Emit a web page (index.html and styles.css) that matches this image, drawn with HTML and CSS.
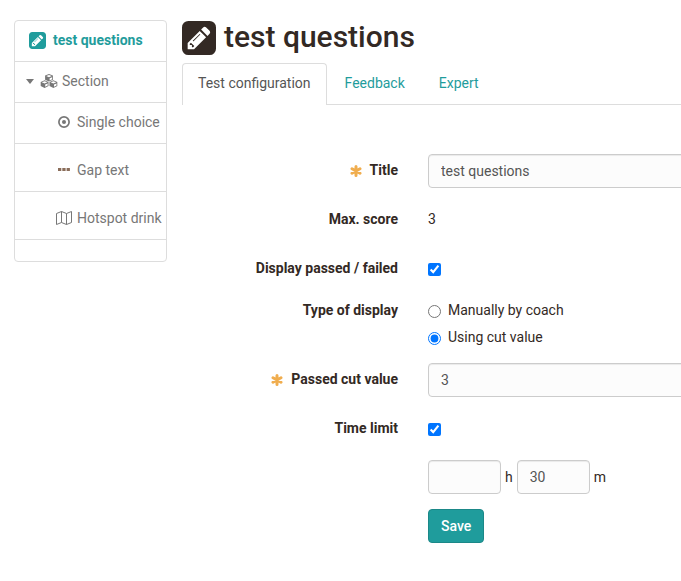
FILE: index.html
```html
<!DOCTYPE html>
<html lang="en">
<head>
<meta charset="utf-8">
<title>test questions</title>
<link rel="stylesheet" href="styles.css">
</head>
<body>
<svg class="defs" aria-hidden="true">
  <symbol id="pencil-square" viewBox="0 128 1536 1536">
    <path d="M404 1108l152 152-52 52h-56v-96h-96v-56zm414-390q14 13-3 30l-291 291q-17 17-30 3-14-13 3-30l291-291q17-17 30-3zm-274 690l544-544-288-288-544 544v288h288zm608-608l92-92q28-28 28-68t-28-68l-152-152q-28-28-68-28t-68 28l-92 92zm384-384v960q0 119-84.5 203.5t-203.5 84.5h-960q-119 0-203.5-84.5t-84.5-203.5v-960q0-119 84.5-203.5t203.5-84.5h960q119 0 203.5 84.5t84.5 203.5z"/>
  </symbol>
  <symbol id="asterisk" viewBox="0 0 12 12">
    <path d="M6 1.500v9M2 3.700l8 4.600M2 8.300l8-4.600" fill="none" stroke="currentColor" stroke-width="3" stroke-linecap="round"/>
  </symbol>
</svg>
<div class="page">
  <nav class="tree" aria-label="Test structure">
    <ul>
      <li class="root"><a href="#"><svg class="icon"><use href="#pencil-square"/></svg>test questions</a></li>
      <li class="section"><a href="#"><svg class="caret" viewBox="0 0 8 5"><path d="M0 0h8L4 5z"/></svg><svg class="cubes" viewBox="0 0 18 14"><g id="cube"><path d="M9 0l3.900 1.600v4.200L9 7.600 5.100 5.800V1.600z"/><path d="M6.200 2L9 3.200 11.800 2 9 .9zM9.600 6.400V4.200l2.500-1v2.100z" class="cut"/></g><use href="#cube" x="-4.400" y="6.300"/><use href="#cube" x="4.400" y="6.300"/></svg>Section</a></li>
      <li class="leaf"><a href="#"><span class="slot"><svg class="dot" viewBox="0 0 12 12"><circle cx="6" cy="6" r="5.100" fill="none" stroke="currentColor" stroke-width="1.700"/><circle cx="6" cy="6" r="2"/></svg></span>Single choice</a></li>
      <li class="leaf tall"><a href="#"><span class="slot"><svg class="dots" viewBox="0 0 12 3"><path d="M0 0h3.300v3H0zM4.300 0h3.300v3H4.300zM8.600 0h3.300v3H8.600z"/></svg></span>Gap text</a></li>
      <li class="leaf tall"><a href="#"><span class="slot"><svg class="map" viewBox="0 0 16 14"><path d="M.5 2.500l5-2 5 2 5-2v11l-5 2-5-2-5 2zM5.500.5v11M10.500 2.500v11" fill="none" stroke="currentColor"/></svg></span>Hotspot drink</a></li>
    </ul>
  </nav>
  <main>
    <h1><svg class="icon"><use href="#pencil-square"/></svg>test questions</h1>
    <ul class="tabs">
      <li><a class="active" href="#">Test configuration</a></li>
      <li><a href="#">Feedback</a></li>
      <li><a href="#">Expert</a></li>
    </ul>
    <form>
      <div class="row">
        <label class="name" for="title"><svg class="required"><use href="#asterisk"/></svg>Title</label>
        <input class="text" id="title" type="text" value="test questions">
      </div>
      <div class="row">
        <span class="name">Max. score</span>
        <span class="value">3</span>
      </div>
      <div class="row">
        <label class="name" for="passed">Display passed / failed</label>
        <div class="option"><input id="passed" type="checkbox" checked></div>
      </div>
      <div class="row" role="radiogroup" aria-labelledby="type">
        <span class="name" id="type">Type of display</span>
        <div>
          <label class="option"><input type="radio" name="type">Manually by coach</label>
          <label class="option"><input type="radio" name="type" checked>Using cut value</label>
        </div>
      </div>
      <div class="row">
        <label class="name" for="cut"><svg class="required"><use href="#asterisk"/></svg>Passed cut value</label>
        <input class="text" id="cut" type="text" value="3">
      </div>
      <div class="row limit">
        <label class="name" for="limit">Time limit</label>
        <div class="option"><input id="limit" type="checkbox" checked></div>
      </div>
      <div class="row">
        <div class="time">
          <input class="text" id="hours" type="text"><label for="hours">h</label>
          <input class="text" id="minutes" type="text" value="30"><label for="minutes">m</label>
        </div>
      </div>
      <div class="row">
        <button type="submit">Save</button>
      </div>
    </form>
  </main>
</div>
</body>
</html>
```
FILE: styles.css
```css
* { box-sizing: border-box; }

body {
  margin: 0;
  overflow-x: hidden;
  background: #fff;
  color: #332924;
  font: 14px/20px Roboto, "Liberation Sans", sans-serif;
}

ul { margin: 0; padding: 0; list-style: none; }
a { color: #1f9c9c; text-decoration: none; }
svg { flex: none; fill: currentColor; }
.defs { position: absolute; width: 0; height: 0; }

.page {
  display: grid;
  grid-template-columns: 153px minmax(0, 1fr);
  gap: 15px;
  align-items: start;
  padding: 20px 0 20px 14px;
}

.tree {
  padding-bottom: 21px;
  border: 1px solid #ddd;
  border-radius: 4px;
}
.tree li { border-bottom: 1px solid #ddd; }
.tree a {
  display: flex;
  align-items: center;
  height: 40px;
  padding-bottom: 2px;
  color: #777;
  white-space: nowrap;
}
.tree .tall a { height: 47px; padding-top: 6px; }
.tree .root a {
  gap: 7px;
  padding-left: 14px;
  color: #1f9c9c;
  font-weight: 700;
}
.root .icon { width: 17px; height: 17px; }
.tree .section a { padding-left: 11px; }
.caret { width: 8px; height: 5px; margin-right: 6px; }
.cubes { width: 18px; height: 14px; margin-right: 4px; }
.cut { fill: #fff; }
.tree .leaf a { gap: 5px; padding-left: 41px; }
.slot { display: flex; justify-content: center; width: 16px; }
.dot { width: 12px; height: 12px; }
.dots { width: 12px; height: 3px; color: #8a6d5a; }
.map { width: 16px; height: 14px; }

h1 {
  display: flex;
  align-items: flex-start;
  gap: 8px;
  margin: 0 0 8px;
  font-size: 30px;
  font-weight: 500;
  line-height: 33px;
}
h1 .icon { width: 34px; height: 34px; margin-top: 1px; }

.tabs {
  display: flex;
  gap: 2px;
  margin-bottom: 49px;
  border-bottom: 1px solid #ddd;
}
.tabs a {
  display: block;
  padding: 9px 15px 12px;
  border: 1px solid transparent;
  border-bottom: 0;
  border-radius: 4px 4px 0 0;
}
.tabs li { margin-bottom: -1px; }
.tabs .active {
  border-color: #ddd;
  background: #fff;
  color: #555;
}

.row {
  display: grid;
  grid-template-columns: 216px minmax(0, 1fr);
  column-gap: 30px;
  align-items: start;
  margin-bottom: 15px;
}
.name {
  padding-top: 6px;
  font-weight: 700;
  text-align: right;
}
.required {
  width: 12px;
  height: 12px;
  margin-right: 8px;
  vertical-align: -2px;
  color: #f0ad4e;
}
.value { padding: 6px 0 8px; }

.text {
  height: 34px;
  width: calc(100% + 15px);
  padding: 6px 12px;
  border: 1px solid #ccc;
  border-radius: 4px;
  background: #fcfcfc;
  box-shadow: inset 0 1px 1px rgba(0, 0, 0, .075);
  color: #555;
  font: inherit;
}

.option {
  display: flex;
  gap: 7px;
  padding-top: 6px;
  min-height: 27px;
}
.option input { width: 13px; height: 13px; margin: 5px 0 0; }
.limit { margin-bottom: 21px; }

.time, button { grid-column: 2; }
.time { display: flex; align-items: center; gap: 4px; }
.time .text { width: 73px; }

button {
  justify-self: start;
  padding: 6px 12px;
  border: 1px solid #1b8888;
  border-radius: 4px;
  background: #1f9c9c;
  color: #fff;
  font: 500 14px/20px Roboto, "Liberation Sans", sans-serif;
}
```
